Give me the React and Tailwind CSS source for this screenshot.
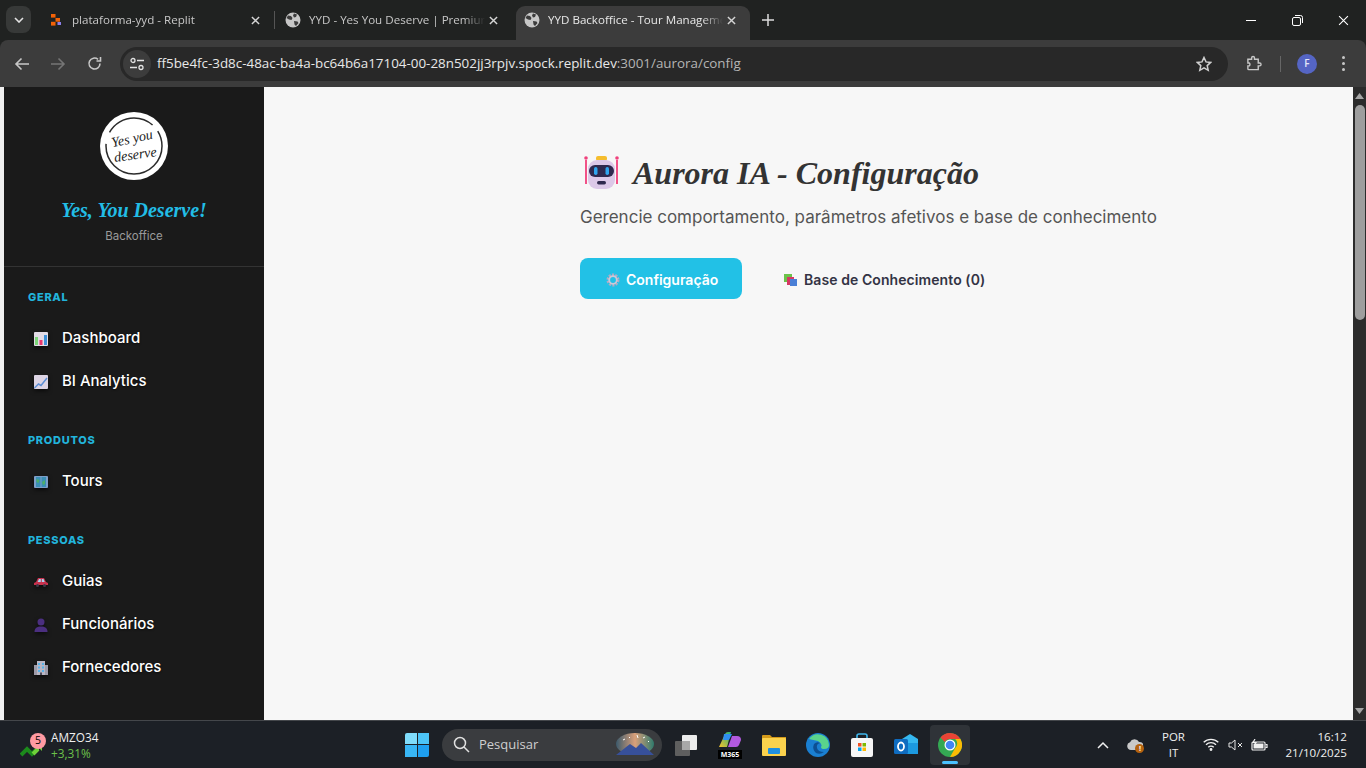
import React from "react";

const Globe = ({ c = "#c7c7c7" }) => (
  <svg width="16" height="16" viewBox="0 0 16 16" className="shrink-0">
    <circle cx="8" cy="8" r="7.5" fill={c} />
    <path d="M3 3.500l3 .5 1.500 2-1 2-2.500-.5L1.500 6zM9 1.500l3 1-1 2.500-2 .5-1-2zM9 9l3.500 .5 1 1.500-2.500 3-1.500-1.500z" fill="#3c3c3c" />
  </svg>
);

const X = ({ s = 10, c = "#d5d5d5", w = 1.6 }) => (
  <svg width={s} height={s} viewBox="0 0 10 10" className="shrink-0">
    <path d="M1 1l8 8M9 1l-8 8" stroke={c} strokeWidth={w} />
  </svg>
);

function Tab({ icon, title, active, w, pad, last }) {
  return (
    <div className={`h-[34px] pb-[6px] flex items-center shrink-0 relative ${w} ${pad} ${active ? "bg-[#3c3c3c] rounded-t-[9px]" : ""}`}>
      <div className="w-4 flex justify-center shrink-0">{icon}</div>
      <div className={`ml-2 flex-1 overflow-hidden whitespace-nowrap text-[11.6px] [font-family:'Open_Sans',sans-serif] [mask-image:linear-gradient(to_right,#000_88%,transparent)] ${active ? "text-[#e8e8e8]" : "text-[#c7c7c7]"}`}>{title}</div>
      <div className="w-4 flex justify-center shrink-0"><X s={9} /></div>
      {last}
    </div>
  );
}

function ChromeBar() {
  return (
    <div className="bg-[#202221] shrink-0">
      <div className="h-10 flex items-end">
        <div className="w-[25px] h-[27px] ml-[6px] mb-[7px] rounded-lg bg-[#373938] flex items-center justify-center">
          <svg width="10" height="6" viewBox="0 0 10 6"><path d="M1 1l4 4 4-4" stroke="#e3e3e3" strokeWidth="1.600" fill="none" /></svg>
        </div>
        <div className="ml-[9px] flex items-end">
          <Tab w="w-[235px]" pad="pl-2 pr-[12px]" title="plataforma-yyd - Replit" icon={
            <svg width="12" height="12" viewBox="0 0 12 12"><rect x="1" y="0" width="4.500" height="3.600" fill="#f26207" /><rect x="1" y="7.800" width="4.500" height="3.800" fill="#f26207" /><rect x="5.500" y="4" width="4.500" height="3.700" fill="#f26207" /><rect x="7.500" y="8" width="3.500" height="3" fill="#8b7fe8" /></svg>
          } last={<div className="absolute right-0 top-[5px] w-px h-[18px] bg-[#555]" />} />
          <Tab w="w-[241px]" pad="pl-[10px] pr-[15px]" title="YYD - Yes You Deserve | Premium Tours" icon={<Globe />} />
          <Tab active w="w-[234px]" pad="pl-2 pr-[11px]" title="YYD Backoffice - Tour Management" icon={<Globe />} />
        </div>
        <div className="w-[36px] h-[34px] pb-[6px] flex items-center justify-center">
          <svg width="12" height="12" viewBox="0 0 12 12"><path d="M6 0v12M0 6h12" stroke="#dcdcdc" strokeWidth="1.500" /></svg>
        </div>
        <div className="flex-1" />
        <div className="flex h-10 items-center text-white">
          <div className="w-[46px] flex justify-center"><div className="w-[10px] h-px bg-white" /></div>
          <div className="w-[46px] flex justify-center">
            <svg width="11" height="11" viewBox="0 0 11 11" fill="none" stroke="#fff"><rect x=".5" y="2.500" width="8" height="8" rx="1.500" /><path d="M3 .5h5.500a2 2 0 0 1 2 2V8" /></svg>
          </div>
          <div className="w-[46px] flex justify-center"><X s={11} c="#fff" w={1} /></div>
        </div>
      </div>
      <div className="h-[47px] bg-[#3c3c3c] rounded-t-[8px] flex items-center">
        <div className="w-[120px] flex items-center shrink-0">
          <div className="w-[44px] flex justify-center">
            <svg width="16" height="14" viewBox="0 0 16 14" fill="none" stroke="#c7c7c7" strokeWidth="1.600"><path d="M15 7H2M7.500 1.500L2 7l5.500 5.500" /></svg>
          </div>
          <div className="w-[28px] flex justify-center">
            <svg width="16" height="14" viewBox="0 0 16 14" fill="none" stroke="#757575" strokeWidth="1.600"><path d="M1 7h13M8.500 1.500L14 7l-5.500 5.500" /></svg>
          </div>
          <div className="w-[44px] flex justify-center">
            <svg width="15" height="15" viewBox="0 0 15 15" fill="none" stroke="#c7c7c7" strokeWidth="1.600"><path d="M13 7.500A5.500 5.500 0 1 1 11 3.300" /><path d="M13.500 1v4h-4" /></svg>
          </div>
        </div>
        <div className="w-[1108px] h-[34px] bg-[#282828] rounded-full flex items-center shrink-0">
          <div className="ml-[3px] w-[28px] h-[28px] rounded-full bg-[#3c3c3c] flex items-center justify-center">
            <svg width="16" height="14" viewBox="0 0 16 14" fill="none" stroke="#e3e3e3" strokeWidth="1.300"><circle cx="4" cy="3.500" r="2" /><path d="M8 3.500h7M1 10.500h7" /><circle cx="12" cy="10.500" r="2" /></svg>
          </div>
          <div className="ml-[6px] text-[13.4px] whitespace-nowrap [font-family:'Open_Sans',sans-serif]">
            <span className="text-[#e8e8e8]">ff5be4fc-3d8c-48ac-ba4a-bc64b6a17104-00-28n502jj3rpjv.spock.replit.dev</span>
            <span className="text-[#b5b5b5]">:3001/aurora/config</span>
          </div>
          <div className="flex-1" />
          <svg width="16" height="16" viewBox="0 0 16 16" fill="none" stroke="#d0d0d0" strokeWidth="1.500" className="mr-4"><path d="M8 1.500l2 4.400 4.700.5-3.500 3.200 1 4.700L8 11.900l-4.200 2.400 1-4.700L1.300 6.400 6 5.900z" /></svg>
        </div>
        <div className="ml-[18px] w-4 flex justify-center">
          <svg width="17" height="17" viewBox="0 0 17 17" fill="none" stroke="#c7c7c7" strokeWidth="1.500"><path d="M2 4h4V2.500a1.500 1.500 0 0 1 3 0V4h4v4h1.500a1.500 1.500 0 0 1 0 3H13v4H3a1 1 0 0 1-1-1v-3h1.500a2 2 0 0 0 0-3H2z" /></svg>
        </div>
        <div className="ml-[18px] w-px h-4 bg-[#666]" />
        <div className="ml-4 w-5 h-5 rounded-full bg-[#5565c4] flex items-center justify-center text-[10px] font-semibold text-[#e3e6f8] [font-family:'Open_Sans',sans-serif]">F</div>
        <div className="ml-[25px] flex flex-col gap-[3px]">
          <div className="w-[3px] h-[3px] rounded-full bg-[#c7c7c7]" />
          <div className="w-[3px] h-[3px] rounded-full bg-[#c7c7c7]" />
          <div className="w-[3px] h-[3px] rounded-full bg-[#c7c7c7]" />
        </div>
      </div>
    </div>
  );
}

const IDash = () => (
  <svg width="16" height="16" viewBox="0 0 16 16"><rect x="1" y="1" width="14" height="14" rx="1" fill="#e2dbe6" /><rect x="2" y="6" width="3" height="8" fill="#7ed67a" /><rect x="6.500" y="9" width="3" height="5" fill="#e8356d" /><rect x="11" y="4" width="3" height="10" fill="#3f8fd8" /></svg>
);
const ITrend = () => (
  <svg width="16" height="16" viewBox="0 0 16 16"><rect x="1" y="1" width="14" height="14" rx="1" fill="#ddd4e4" /><path d="M1.500 14l4-4 2.500 1.500L14 4" stroke="#5d8fd6" strokeWidth="1.500" fill="none" /></svg>
);
const IMap = () => (
  <svg width="16" height="16" viewBox="0 0 16 16"><rect x="1" y="2" width="14" height="12" rx="1" fill="#7d9fc9" /><rect x="3" y="3" width="4.500" height="10" fill="#3a8fb5" /><rect x="8.500" y="3" width="4.500" height="10" fill="#3a8fb5" /><path d="M3.500 5l3 1-1 3-2-1zM9 8l3-2v4l-2 1z" fill="#4cae6a" /></svg>
);
const ICar = () => (
  <svg width="16" height="16" viewBox="0 0 16 16"><path d="M1 11V9l2-1 2-4h6l2 4 2 1v2z" fill="#c8314d" /><path d="M6 5h1.800v3H4.600zM8.800 5H10.500l1.200 3H8.800z" fill="#a9d4ef" /><circle cx="4.500" cy="11.500" r="1.500" fill="#3c3848" /><circle cx="11.500" cy="11.500" r="1.500" fill="#3c3848" /></svg>
);
const IPerson = () => (
  <svg width="16" height="16" viewBox="0 0 16 16"><circle cx="8" cy="5" r="3.500" fill="#4b2f80" /><path d="M1.500 15c0-4 2.500-5.500 6.500-5.500s6.500 1.500 6.500 5.500z" fill="#4b2f80" /></svg>
);
const IBuilding = () => (
  <svg width="16" height="16" viewBox="0 0 16 16"><rect x="1" y="5" width="14" height="10" fill="#9d9aa8" /><rect x="4" y="1" width="8" height="14" fill="#b9b6c4" /><path d="M5 3h2v2H5zM9 3h2v2H9zM5 6.500h2v2H5zM9 6.500h2v2H9zM5 10h2v2H5zM9 10h2v2H9z" fill="#57b2e8" /><rect x="7" y="12.500" width="2" height="2.500" fill="#4e4c5c" /></svg>
);

const sections = [
  { title: "GERAL", h: "mt-[22px]", items: [["Dashboard", <IDash />], ["BI Analytics", <ITrend />]] },
  { title: "PRODUTOS", h: "mt-[29px]", items: [["Tours", <IMap />]] },
  { title: "PESSOAS", h: "mt-[29px]", items: [["Guias", <ICar />], ["Funcionários", <IPerson />], ["Fornecedores", <IBuilding />]] },
];

function Logo() {
  return (
    <svg width="68" height="68" viewBox="0 0 68 68" className="block">
      <circle cx="34" cy="34" r="34" fill="#fff" />
      <circle cx="34" cy="34" r="28" fill="none" stroke="#2b2b2b" strokeWidth="1.500" strokeDasharray="90 12 50 8" />
      <text x="33" y="31" textAnchor="middle" fontSize="14" fontStyle="italic" fontFamily="'Liberation Serif',serif" fill="#222" transform="rotate(-12 33 31)">Yes you</text>
      <text x="36" y="47" textAnchor="middle" fontSize="14" fontStyle="italic" fontFamily="'Liberation Serif',serif" fill="#222" transform="rotate(-8 36 47)">deserve</text>
    </svg>
  );
}

function Sidebar() {
  return (
    <aside className="ml-1 w-[260px] h-full bg-[#1a1a1a] shrink-0 overflow-hidden">
      <div className="h-[180px] border-b border-[#333] flex flex-col items-center pt-[25px]">
        <Logo />
        <div className="mt-[14px] h-[32px] flex items-center text-[20px] font-bold italic text-[#22bde6] whitespace-nowrap [font-family:'Liberation_Serif',serif]">Yes, You Deserve!</div>
        <div className="mt-[2px] text-[11.5px] text-[#9a9a9a]">Backoffice</div>
      </div>
      {sections.map((s) => (
        <div key={s.title} className={s.h}>
          <div className="pl-6 h-[16px] flex items-center text-[11px] font-extrabold tracking-[0.7px] text-[#22b4dc]">{s.title}</div>
          <div className="mt-[12px]">
            {s.items.map(([label, icon]) => (
              <div key={label} className="h-[43px] flex items-center pl-[29px]">
                <div className="w-4 drop-shadow-[0_2px_2px_rgba(0,0,0,0.6)]">{icon}</div>
                <div className="ml-[13px] text-[15px] font-medium text-white [text-shadow:0_1px_2px_rgba(0,0,0,0.6)]">{label}</div>
              </div>
            ))}
          </div>
        </div>
      ))}
    </aside>
  );
}

const Robot = () => (
  <svg width="36" height="36" viewBox="0 0 36 36" className="ml-1 shrink-0">
    <path d="M2 6v24M33 6v24" stroke="#f0407c" strokeWidth="1.800" />
    <circle cx="2" cy="4" r="1.800" fill="#f0407c" />
    <circle cx="33" cy="4" r="1.800" fill="#f0407c" />
    <rect x="12" y="2" width="11" height="5" rx="2" fill="#f5bd2e" />
    <rect x="4" y="6" width="27" height="29" rx="9" fill="#dcc9e8" />
    <rect x="5" y="11" width="25" height="12" rx="6" fill="#2f2a4e" />
    <rect x="10" y="13" width="3.500" height="8" rx="1.700" fill="#2fa6ee" />
    <rect x="21.500" y="13" width="3.500" height="8" rx="1.700" fill="#2fa6ee" />
    <rect x="13" y="27" width="9" height="3.500" rx="1.700" fill="#2f2a4e" />
  </svg>
);

const Gear = () => (
  <svg width="14" height="14" viewBox="0 0 14 14"><circle cx="7" cy="7" r="5" fill="none" stroke="#b4abc4" strokeWidth="3" strokeDasharray="2 1.140" /><circle cx="7" cy="7" r="3.800" fill="none" stroke="#cfc8d8" strokeWidth="1.800" /></svg>
);

const Books = () => (
  <svg width="14" height="14" viewBox="0 0 14 14"><rect x="0" y="1" width="8" height="8" fill="#6cc24a" /><rect x="3" y="4" width="7" height="8" fill="#d63864" /><rect x="6" y="6" width="7" height="7" fill="#4a7fd6" /></svg>
);

function Main() {
  return (
    <main className="flex-1 h-full bg-[#f7f7f7] pl-[316px] pt-[60px]">
      <div className="flex items-center h-[50px]">
        <Robot />
        <h1 className="ml-[13px] pt-[2px] text-[32px] font-bold italic text-[#333] whitespace-nowrap [font-family:'Liberation_Serif',serif]">Aurora IA - Configuração</h1>
      </div>
      <p className="mt-[9px] h-[24px] flex items-center text-[17px] text-[#555] whitespace-nowrap">Gerencie comportamento, parâmetros afetivos e base de conhecimento</p>
      <div className="mt-[28px] flex items-center">
        <button className="w-[162px] h-[41px] rounded-lg bg-[#22c1e6] flex items-center pl-[26px] pt-[2px] text-[14px] font-semibold text-white">
          <Gear /><span className="ml-[6px]">Configuração</span>
        </button>
        <button className="ml-[42px] h-[41px] flex items-center pt-[2px] text-[14px] font-semibold tracking-[0.08px] text-[#333344]">
          <Books /><span className="ml-[6px]">Base de Conhecimento (0)</span>
        </button>
      </div>
    </main>
  );
}

function Scrollbar() {
  return (
    <div className="w-[13px] h-full bg-[#2c2c2c] shrink-0 flex flex-col items-center">
      <div className="h-[18px] flex items-center">
        <svg width="9" height="6" viewBox="0 0 9 6"><path d="M4.500 0L9 6H0z" fill="#a6a6a6" /></svg>
      </div>
      <div className="w-[10px] h-[215px] rounded-full bg-[#9e9e9e]" />
      <div className="flex-1" />
      <div className="h-[18px] flex items-center">
        <svg width="9" height="6" viewBox="0 0 9 6"><path d="M4.500 6L9 0H0z" fill="#a6a6a6" /></svg>
      </div>
    </div>
  );
}

const Slot = ({ children, active }) => (
  <div className={`w-[40px] h-[40px] ml-[4px] flex items-center justify-center relative rounded-[4px] ${active ? "bg-[#2f3338]" : ""}`}>{children}</div>
);

function Taskbar() {
  return (
    <div className="h-[48px] shrink-0 bg-[#1c2026] border-t border-[#44474b] flex items-center [font-family:'Open_Sans',sans-serif]">
      <div className="w-[403px] shrink-0 flex items-center pl-[20px]">
        <div className="relative w-[31px] h-[34px]">
          <svg width="24" height="18" viewBox="0 0 24 18" className="absolute left-0 top-[14px]"><path d="M1 13l6-6 5 5 5-5" stroke="#1c8a1c" strokeWidth="4" fill="none" /><path d="M13 12l5-5 1 0" stroke="#6fd13a" strokeWidth="4" fill="none" /><path d="M16 3h6v6z" fill="#6fd13a" /></svg>
          <div className="absolute left-[10px] top-[5px] w-4 h-4 rounded-full bg-[#ff9aa2] flex items-center justify-center text-[10.500px] text-black">5</div>
        </div>
        <div className="leading-[16px]">
          <div className="text-[11.8px] text-[#f0f0f0]">AMZO34</div>
          <div className="text-[11.8px] text-[#6cc04a]">+3,31%</div>
        </div>
      </div>
      <div className="w-[28px] flex justify-center shrink-0">
        <div className="w-[24px] h-[24px] grid grid-cols-2 grid-rows-2 gap-[1px]">
          <div className="bg-[#7fdcfb] rounded-tl-[2px]" /><div className="bg-[#4cc4f7]" /><div className="bg-[#38b6f5]" /><div className="bg-[#1e9ff0] rounded-br-[2px]" />
        </div>
      </div>
      <div className="ml-[11px] w-[220px] h-[32px] rounded-full bg-[#3a3c3f] flex items-center pl-[11px] shrink-0">
        <svg width="17" height="17" viewBox="0 0 17 17" fill="none" stroke="#e0e0e0" strokeWidth="1.500"><circle cx="7" cy="7" r="5.500" /><path d="M11 11l5 5" /></svg>
        <span className="ml-[9px] text-[13px] text-[#cfcfcf]">Pesquisar</span>
        <div className="flex-1" />
        <svg width="40" height="24" viewBox="0 0 40 24" className="mr-[7px]"><defs><linearGradient id="sk" x1="0" x2="1"><stop offset="0" stopColor="#3c5a6c" /><stop offset=".5" stopColor="#d9a07a" /><stop offset="1" stopColor="#2f7a6c" /></linearGradient></defs><ellipse cx="20" cy="11" rx="19" ry="11" fill="url(#sk)" /><path d="M1 22l14-11 6 4 5-5 13 12z" fill="#37509a" /><path d="M8 7l2-1M14 4l1 1M22 2l1 3M28 5l2-1M33 8l1 1" stroke="#fff" strokeWidth="1" /></svg>
      </div>
      <div className="flex items-center shrink-0">
        <Slot>
          <svg width="24" height="22" viewBox="0 0 24 22"><rect x="8" y="1" width="15" height="15" rx="1" fill="#ececec" /><rect x="1" y="7" width="15" height="15" rx="1" fill="#5f5f5f" /><rect x="8" y="7" width="8" height="9" fill="#a8a8a8" /></svg>
        </Slot>
        <Slot>
          <div className="relative w-[24px] h-[28px]">
            <svg width="24" height="20" viewBox="0 0 24 20" className="absolute top-0 left-0"><path d="M1 16L7 3q1-2 3-2h3l-4 15z" fill="url(#m1)" /><path d="M10 16l4-11h5q4 0 4 4l-2 5q-1 2-3 2z" fill="#b25ae0" /><path d="M6 3h8l-3 6H5z" fill="#2f8ff0" /><defs><linearGradient id="m1" x1="0" y1="1" x2="1" y2="0"><stop offset="0" stopColor="#f5c32c" /><stop offset="1" stopColor="#25b07a" /></linearGradient></defs></svg>
            <div className="absolute left-0 right-0 bottom-0 h-[9px] bg-black text-white text-[7px] leading-[9px] text-center font-bold">M365</div>
          </div>
        </Slot>
        <Slot>
          <svg width="24" height="22" viewBox="0 0 24 22"><path d="M0 2q0-1 1-1h7l2 2h14v5H0z" fill="#d49a1a" /><rect x="0" y="4" width="24" height="18" rx="1" fill="#fbd24d" /><rect x="6" y="14" width="12" height="6" rx="1" fill="#1f8fe0" /></svg>
        </Slot>
        <Slot>
          <svg width="24" height="24" viewBox="0 0 24 24"><circle cx="12" cy="12" r="12" fill="#1a7fd1" /><path d="M3 6a11 11 0 0 1 20 6q0 4-5 4-3 0-3-2 2-3-3-6-5-1-9-2z" fill="#5ad48c" /><path d="M10 20a8 8 0 0 1-2-9q3-3 6-1-4 1-3 5 1 4 7 4-4 3-8 1z" fill="#0d4f92" /></svg>
        </Slot>
        <Slot>
          <svg width="22" height="24" viewBox="0 0 22 24"><path d="M6 6V3q0-2 2-2h6q2 0 2 2v3" stroke="#3fb6ec" strokeWidth="1.600" fill="none" /><rect x="0" y="5" width="22" height="19" rx="2" fill="#f6f6f6" /><rect x="7" y="10" width="3.500" height="3.500" fill="#f25022" /><rect x="11.500" y="10" width="3.500" height="3.500" fill="#7fba00" /><rect x="7" y="14.500" width="3.500" height="3.500" fill="#00a4ef" /><rect x="11.500" y="14.500" width="3.500" height="3.500" fill="#ffb900" /></svg>
        </Slot>
        <Slot>
          <svg width="24" height="24" viewBox="0 0 24 24"><path d="M8 6l8-5 8 5v13H8z" fill="#35b8f0" /><path d="M8 10h16v11H8z" fill="#1c9ae0" /><rect x="0" y="6" width="14" height="15" rx="1.500" fill="#0f6cc0" /><ellipse cx="7" cy="13.500" rx="3" ry="4" fill="none" stroke="#fff" strokeWidth="1.800" /></svg>
        </Slot>
        <Slot active>
          <svg width="24" height="24" viewBox="0 0 24 24"><circle cx="12" cy="12" r="12" fill="#34a853" /><path d="M12 0a12 12 0 0 1 10.400 6H12a6 6 0 0 0-5.200 3L2.500 4.500A12 12 0 0 1 12 0z" fill="#ea4335" /><path d="M22.400 6A12 12 0 0 1 12 24l5.200-9a6 6 0 0 0 0-9z" fill="#fbbc04" /><circle cx="12" cy="12" r="5.500" fill="#fff" /><circle cx="12" cy="12" r="4.300" fill="#4285f4" /></svg>
          <div className="absolute bottom-[1px] left-[12px] w-4 h-[3px] rounded-full bg-[#4cc2ff]" />
        </Slot>
      </div>
      <div className="flex-1" />
      <div className="flex items-center shrink-0 text-[#f0f0f0]">
        <svg width="12" height="8" viewBox="0 0 12 8" fill="none" stroke="#f0f0f0" strokeWidth="1.500"><path d="M1 7l5-5 5 5" /></svg>
        <div className="ml-[18px] relative w-4 h-4">
          <svg width="16" height="13" viewBox="0 0 16 13"><path d="M4 13a4 4 0 0 1-1-7.800A5 5 0 0 1 12 5a4 4 0 0 1 1 8z" fill="#c9c9c9" /></svg>
          <div className="absolute -right-[1px] bottom-[0px] w-[9px] h-[9px] rounded-full bg-[#b5620f] text-[7px] leading-[9px] text-center text-white font-bold">!</div>
        </div>
        <div className="ml-[8px] w-[44px] text-center text-[11.500px] leading-[16px]">POR<br />IT</div>
        <svg className="ml-[8px]" width="16" height="13" viewBox="0 0 16 13" fill="none" stroke="#f0f0f0" strokeWidth="1.300"><path d="M.7 4.300a10.500 10.500 0 0 1 14.600 0M3 6.800a7 7 0 0 1 10 0M5.300 9.200a3.700 3.700 0 0 1 5.400 0" /><circle cx="8" cy="11.500" r=".8" fill="#f0f0f0" /></svg>
        <svg className="ml-[9px]" width="16" height="12" viewBox="0 0 16 12" fill="none" stroke="#e6e6e6" strokeWidth="1"><path d="M1 4h2.500L7 1v10L3.500 8H1z" /><path d="M10 4l4 4M14 4l-4 4" /></svg>
        <svg className="ml-[7px]" width="17" height="12" viewBox="0 0 17 12" fill="none" stroke="#f0f0f0" strokeWidth="1.200"><rect x="1" y="3" width="13" height="8" rx="1" /><rect x="2.500" y="4.500" width="10" height="5" fill="#f0f0f0" stroke="none" /><path d="M14.500 5.500h1.500v3h-1.500" /><path d="M4 0L2 3.500h3L3.500 6" /></svg>
        <div className="ml-[17px] mr-[19px] text-right text-[11.6px] leading-[16px]">
          <div>16:12</div>
          <div>21/10/2025</div>
        </div>
      </div>
    </div>
  );
}

export default function App() {
  return (
    <div className="w-[1366px] h-[768px] flex flex-col overflow-hidden [font-family:'Inter',sans-serif]">
      <ChromeBar />
      <div className="flex-1 min-h-0 flex bg-[#f0f0f0]">
        <Sidebar />
        <Main />
        <Scrollbar />
      </div>
      <Taskbar />
    </div>
  );
}
